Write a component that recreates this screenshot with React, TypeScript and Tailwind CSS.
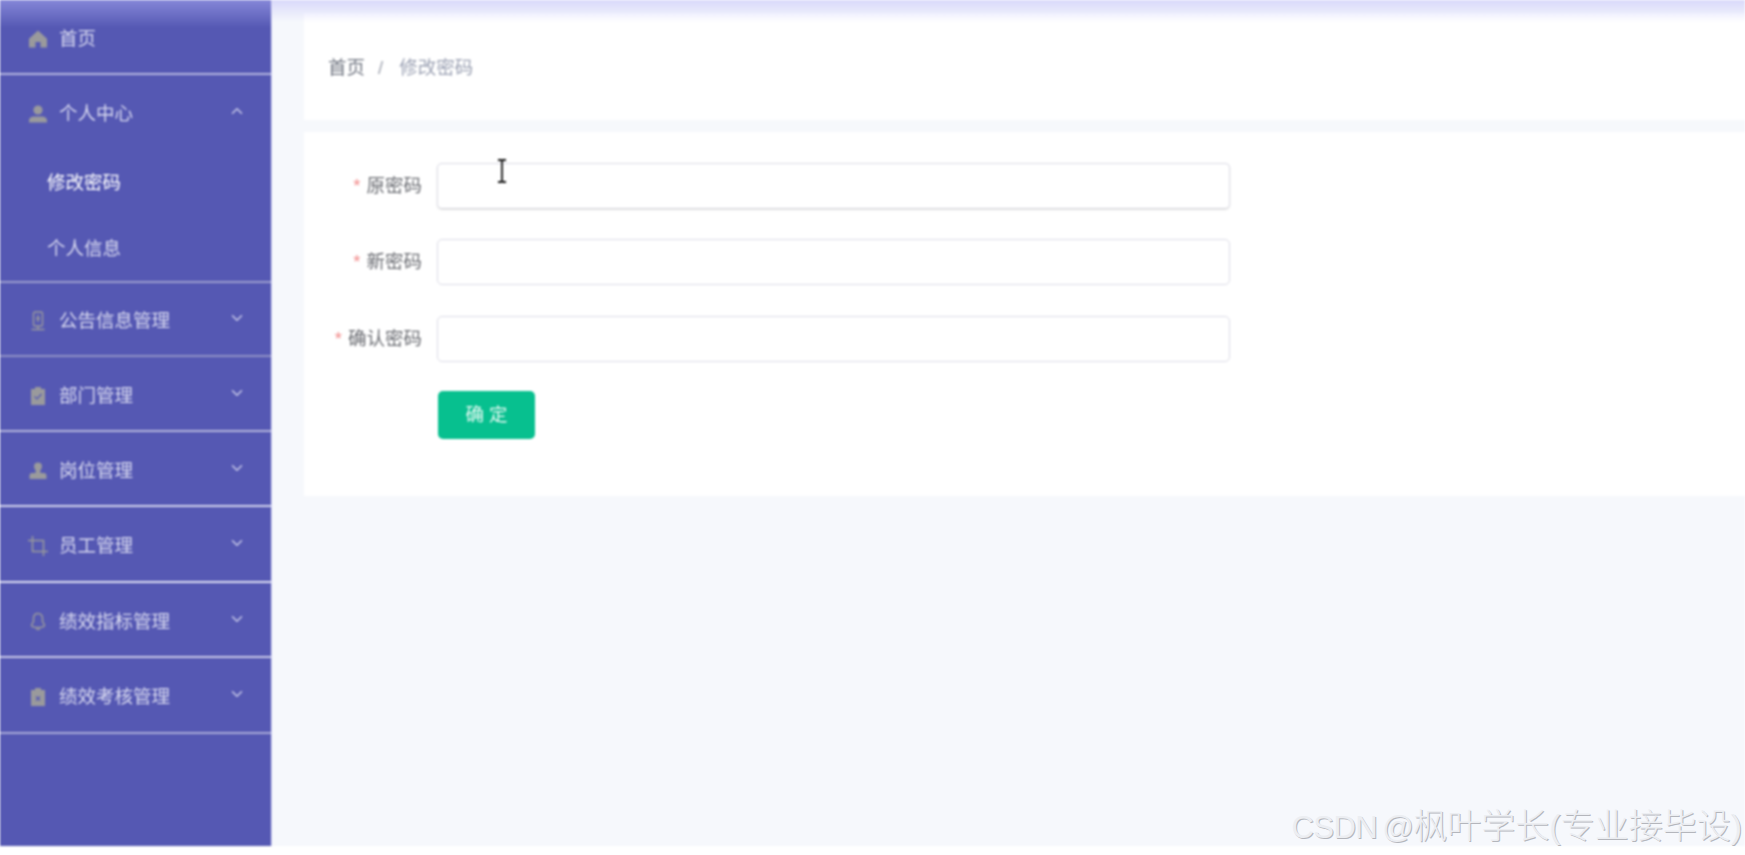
import { ChevronDown, ChevronUp } from 'lucide-react';
import type { ReactNode } from 'react';

const HomeIcon = () => (
  <svg viewBox="0 0 20 20" className="h-5 w-5" fill="currentColor">
    <path d="M10 1.500 1 9.800V18.500h6.500v-5.500h5v5.500H19V9.800z" />
  </svg>
);

const UserIcon = () => (
  <svg viewBox="0 0 20 20" className="h-5 w-5" fill="currentColor">
    <circle cx="10" cy="6" r="4.600" />
    <path d="M1 18.500v-1.700c0-3 2.600-4.300 5.500-4.300h7c2.900 0 5.500 1.300 5.500 4.300v1.700z" />
  </svg>
);

const PhoneIcon = () => (
  <svg viewBox="0 0 20 20" className="h-5 w-5" fill="none" stroke="currentColor" strokeWidth="1.400">
    <rect x="5.500" y="1" width="9" height="14" rx="1.500" />
    <path d="M10 4v7M8 7.500h4M3.500 18.500h13M10 15v3.500" />
  </svg>
);

const ClipboardCheckIcon = () => (
  <svg viewBox="0 0 20 20" className="h-5 w-5" fill="currentColor">
    <path d="M7 1h6v2h4v16H3V3h4z" />
    <path d="m6.500 10.500 2.500 2.500 4.500-5" fill="none" stroke="#5558b3" strokeWidth="1.200" />
  </svg>
);

const StampIcon = () => (
  <svg viewBox="0 0 20 20" className="h-5 w-5" fill="currentColor">
    <path d="M10 1.500a4 4 0 0 1 4 4c0 2-1.300 3-1.800 4.600-.2.800.1 1.900 1 1.900h2.800c1.500 0 2.500 1 2.500 2.500V18H1.500v-3.500C1.500 13 2.500 12 4 12h2.800c.9 0 1.200-1.100 1-1.900C7.300 8.500 6 7.500 6 5.500a4 4 0 0 1 4-4z" />
  </svg>
);

const CropIcon = () => (
  <svg viewBox="0 0 20 20" className="h-5 w-5" fill="none" stroke="currentColor" strokeWidth="1.500">
    <path d="M4.500 0v15.500H20M0 4.500h15.500V20" />
  </svg>
);

const BellIcon = () => (
  <svg viewBox="0 0 20 20" className="h-5 w-5" fill="none" stroke="currentColor" strokeWidth="1.500">
    <path d="M10 1.500c-3 0-4.500 2.400-4.500 5v3L3.500 13c0 1.500 3 2.500 6.500 2.500s6.500-1 6.500-2.500l-2-3.500v-3c0-2.600-1.500-5-4.500-5z" />
    <path d="M8 16.500c.5 1.300 3.500 1.300 4 0" />
  </svg>
);

const ClipboardXIcon = () => (
  <svg viewBox="0 0 20 20" className="h-5 w-5" fill="currentColor">
    <path d="M7 1h6v2h4v16H3V3h4z" />
    <path d="m8 9.500 4 4m0-4-4 4" fill="none" stroke="#5558b3" strokeWidth="1.200" />
  </svg>
);

const menu: { label: string; icon: ReactNode; line: string; height: string }[] = [
  { label: '公告信息管理', icon: <PhoneIcon />, line: 'border-[#8f90c6]', height: 'h-[74px]' },
  { label: '部门管理', icon: <ClipboardCheckIcon />, line: 'border-[#b4b5dd]', height: 'h-[75px]' },
  { label: '岗位管理', icon: <StampIcon />, line: 'border-[#d3d4ee]', height: 'h-[75px]' },
  { label: '员工管理', icon: <CropIcon />, line: 'border-[#dfe0f4]', height: 'h-[76px]' },
  { label: '绩效指标管理', icon: <BellIcon />, line: 'border-[#c9cae9]', height: 'h-[75px]' },
  { label: '绩效考核管理', icon: <ClipboardXIcon />, line: 'border-[#a9aad8]', height: 'h-[76px]' },
];

const fields = [
  { label: '原密码', gap: 'mb-[30px]', input: 'border-b-[#d2d2d8] shadow-[0_1px_2px_rgba(0,0,0,0.1)]' },
  { label: '新密码', gap: 'mb-[31px]', input: '' },
  { label: '确认密码', gap: 'mb-[29px]', input: '' },
];

function MenuTitle({ icon, label, open }: { icon: ReactNode; label: string; open?: boolean }) {
  return (
    <div className="flex items-center pl-[27px] pr-[25px] text-[18.5px] text-[#d9daf0]">
      <span className="mr-[11px] mt-[4px] flex w-[21px] justify-center text-[#9a9a9c]">{icon}</span>
      <span className="mt-[4px] flex-1">{label}</span>
      {open === undefined ? null : open ? (
        <ChevronUp className="mb-[2px] h-[18px] w-[18px] text-[#c9cae9]" strokeWidth={2} />
      ) : (
        <ChevronDown className="mb-[2px] h-[18px] w-[18px] text-[#c9cae9]" strokeWidth={2} />
      )}
    </div>
  );
}

export default function App() {
  return (
    <div className="relative h-[855px] overflow-hidden bg-white font-['Liberation_Sans','Noto_Sans_CJK_SC',sans-serif]">
      <div className="relative flex h-[846px] bg-[#f6f8fc] blur-[0.8px]">
        {/* 左侧菜单 */}
        <aside className="relative w-[272px] shrink-0 border-r border-[#d8d9f5] bg-[#5558b3]">
          <div className="absolute inset-x-0 top-0 h-[28px] bg-gradient-to-b from-[#8587d8] to-transparent" />
          <div className="relative flex h-[75px] items-center border-b-2 border-[#b4b5e0]">
            <div className="w-full">
              <MenuTitle icon={<HomeIcon />} label="首页" />
            </div>
          </div>
          <div className="relative h-[208px] border-b-2 border-[#9c9dcf]">
            <div className="mb-[2px] flex h-[73px] items-center">
              <div className="w-full">
                <MenuTitle icon={<UserIcon />} label="个人中心" open />
              </div>
            </div>
            <div className="flex h-[66px] items-center pl-[47px] text-[18.5px] text-white">修改密码</div>
            <div className="flex h-[66px] items-center pl-[47px] text-[18.5px] text-[#d9daf0]">个人信息</div>
          </div>
          {menu.map((item) => (
            <div key={item.label} className={`flex items-center border-b-2 ${item.height} ${item.line}`}>
              <div className="w-full">
                <MenuTitle icon={item.icon} label={item.label} open={false} />
              </div>
            </div>
          ))}
        </aside>

        {/* 右侧内容 */}
        <main className="relative flex-1 pl-[32px] pt-[13px]">
          <div className="absolute inset-x-0 top-0 z-10 h-[22px] bg-gradient-to-b from-[#d9d9fb] to-transparent" />
          <div className="flex h-[107px] items-center bg-white pl-[24px] pt-[3px] text-[18.5px] text-[#6f7480]">
            <span>首页</span>
            <span className="mx-[13px] text-[#a0a4b0]">/</span>
            <span className="ml-[3px] text-[#9ba1b3]">修改密码</span>
          </div>
          <div className="mt-[12px] h-[364px] bg-white pt-[31px]">
            {fields.map((f) => (
              <div key={f.label} className={`flex items-center ${f.gap}`}>
                <label className="w-[118px] text-right text-[18.5px] text-[#6a6c72]">
                  <span className="mr-[6px] text-[#f28b8b]">*</span>
                  {f.label}
                </label>
                <input
                  aria-label={f.label}
                  className={`ml-[15px] h-[46px] w-[793px] rounded-[5px] border border-[#dcdce6] bg-white ${f.input}`}
                />
              </div>
            ))}
            <button className="ml-[134px] h-[48px] w-[97px] rounded-[5px] bg-[#07c08f] text-[18.5px] text-[#eafaf5]">
              确 定
            </button>
          </div>
          {/* 文本光标 */}
          <svg viewBox="0 0 12 24" className="absolute left-[224px] top-[159px] h-[24px] w-[12px] text-[#111]" fill="none" stroke="currentColor" strokeWidth="1.800">
            <path d="M2 1h3l1 1 1-1h3M6 2v20M2 23h3l1-1 1 1h3" />
          </svg>
        </main>
      </div>

      {/* 水印 */}
      <div className="absolute right-[3px] top-[804px] whitespace-nowrap text-[31px] font-light leading-[44px] tracking-[-0.5px] text-[#eceef2] [text-shadow:1px_1px_0_#b4b6bc] [word-spacing:-3px]">
        CSDN @<span className="text-[34px] tracking-normal">枫叶学长(专业接毕设)</span>
      </div>
    </div>
  );
}
